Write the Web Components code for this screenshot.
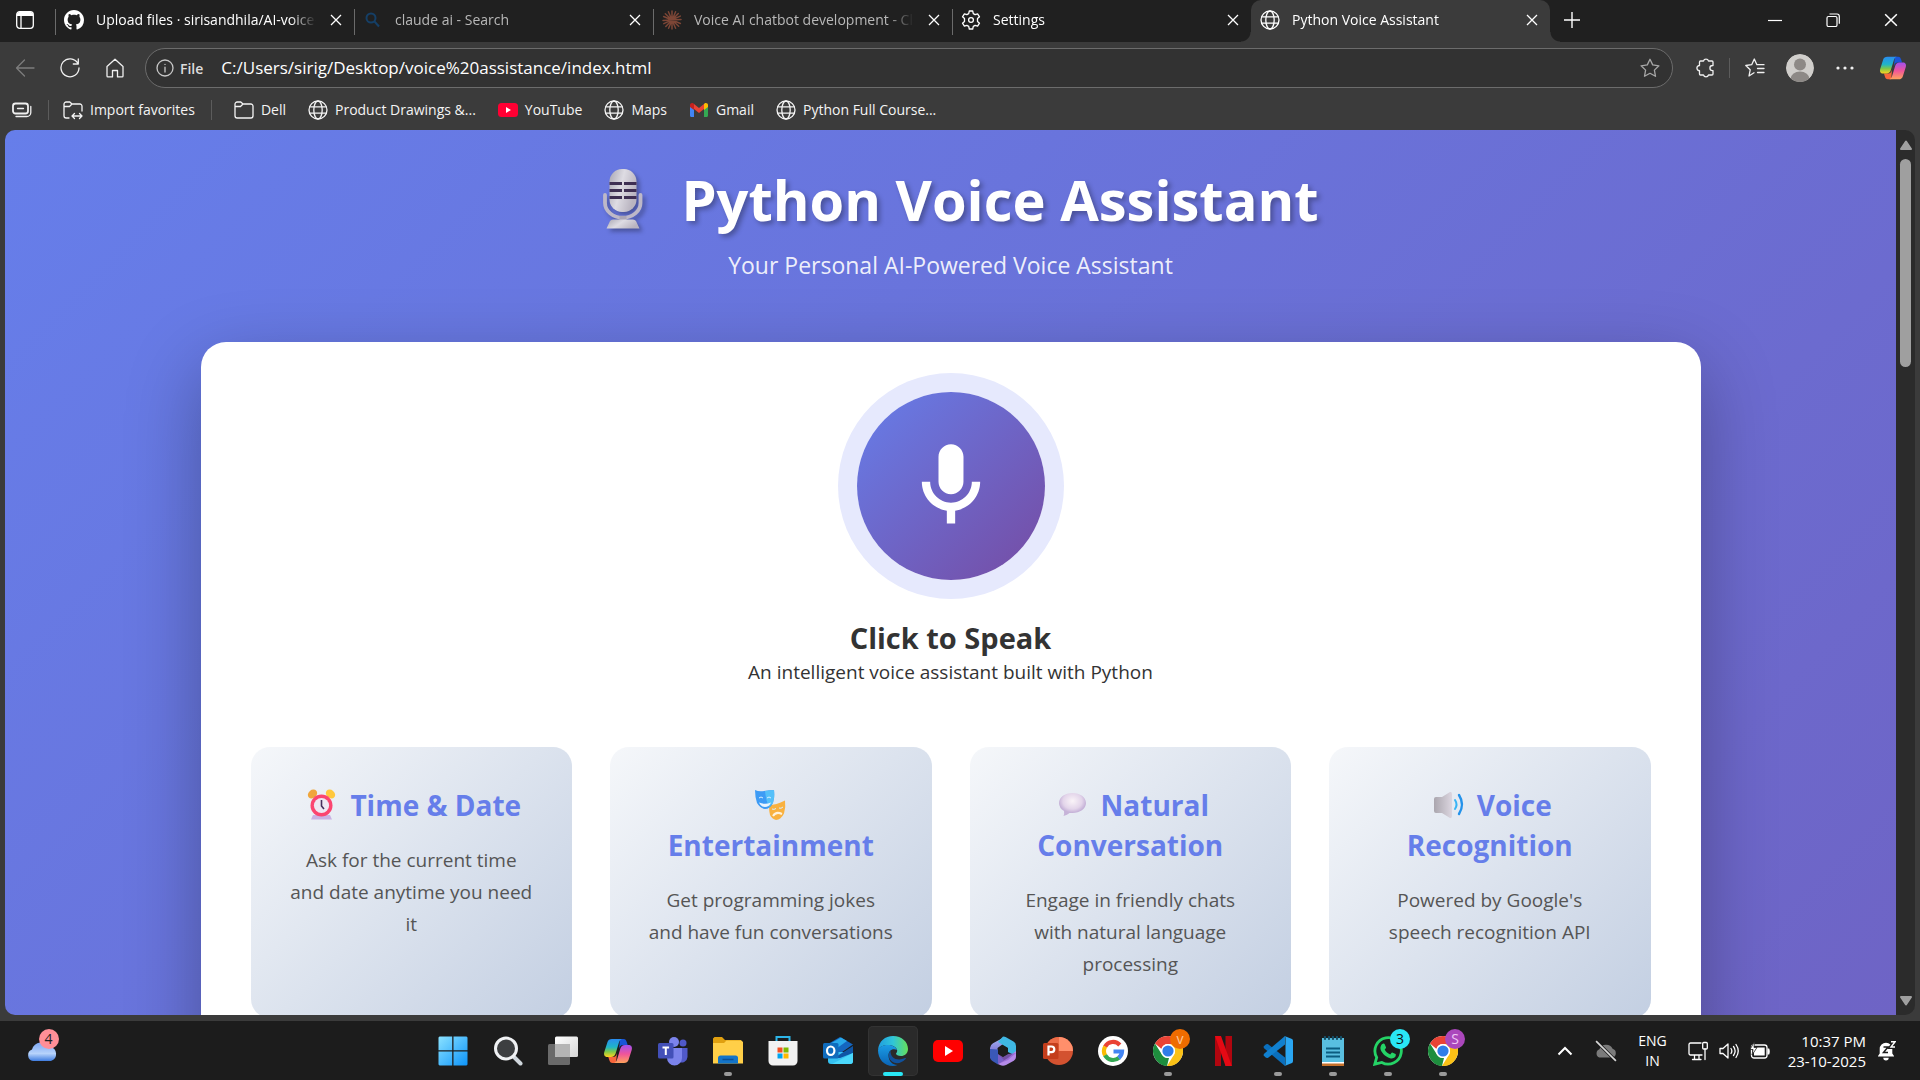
<!DOCTYPE html>
<html lang="en">
<head>
<meta charset="utf-8">
<title>Python Voice Assistant</title>
<style>
html, body { margin: 0; height: 100%; }
body { font-family: "Open Sans", "Noto Sans", sans-serif; background: #3b3b3b; color: #fff; overflow: hidden; }
</style>
</head>
<body>
<desktop-screen></desktop-screen>
<script>
const copilot = `<defs><linearGradient id="a" x1="0" y1="0" x2="0" y2="1"><stop offset="0" stop-color="#2a8cf0"/><stop offset=".45" stop-color="#1fb5c8"/><stop offset=".7" stop-color="#7cc84a"/><stop offset="1" stop-color="#ffd21f"/></linearGradient><linearGradient id="b" x1="0" y1="0" x2="0" y2="1"><stop offset="0" stop-color="#a050f0"/><stop offset=".5" stop-color="#f0549a"/><stop offset="1" stop-color="#ffa35c"/></linearGradient></defs>
<path fill="#1a55d8" d="M17 3h3.500c2 0 2.600 1.200 3.200 3l1 3h-4.500c-2.500 0-3.500 1.500-4.200 4z"/>
<path fill="#f8663c" d="M13 27H9.500c-2 0-2.600-1.200-3.200-3l-1-3h4.500c2.500 0 3.500-1.500 4.200-4z"/>
<path fill="url(#a)" d="M9 3h10c-2 .6-2.700 2.200-3.300 4.200l-3 10C12 19.500 10.600 21 8 21H4.500C1.500 21 .5 18.700 1.300 16L4.500 6C5.200 4 6.500 3 9 3z"/>
<path fill="url(#b)" d="M21 27H11c2-.6 2.700-2.200 3.300-4.200l3-10C18 10.500 19.400 9 22 9h3.500c3 0 4 2.300 3.200 5l-3.200 10c-.7 2-2 3-4.500 3z"/>`;
const chrome = `<circle cx="15" cy="15" r="15" fill="#fff"/><path fill="#ea4335" d="M2 7.500A15 15 0 0 1 28.200 8H15a7 7 0 0 0-6.500 5z"/><path fill="#1e8e3e" d="M2 7.500 8.900 18.500A7 7 0 0 0 15 22h1l-2 8A15 15 0 0 1 2 7.500z"/><path fill="#fbc116" d="M28.200 8H15a7 7 0 0 1 6.100 10.500L14 30A15 15 0 0 0 28.200 8z"/><circle cx="15" cy="15" r="7" fill="#fff"/><circle cx="15" cy="15" r="5.600" fill="#2f7de9"/>`;
const line = (d, extra = '') => `<g fill="none" stroke="currentColor" stroke-width="1.3" stroke-linecap="round" stroke-linejoin="round">${d}</g>${extra}`;
const ICONS = {
  panel: [20, line('<rect x="1.700" y="1.700" width="16.600" height="16.600" rx="3"/><path d="M6 6v12"/>', '<path fill="currentColor" d="M2 6V4.500A2.500 2.500 0 0 1 4.500 2h11A2.500 2.500 0 0 1 18 4.500V6z"/>')],
  github: [16, '<path fill="#fff" d="M8 0C3.580 0 0 3.580 0 8c0 3.540 2.290 6.530 5.470 7.590.4.070.55-.17.55-.38 0-.19-.01-.82-.01-1.490-2.010.37-2.530-.49-2.690-.94-.09-.23-.48-.94-.82-1.130-.28-.15-.68-.52-.01-.53.63-.01 1.080.58 1.230.82.72 1.210 1.870.87 2.330.66.070-.52.28-.87.51-1.070-1.780-.2-3.640-.89-3.640-3.950 0-.87.31-1.590.82-2.150-.08-.2-.36-1.020.08-2.120 0 0 .67-.21 2.200.82.64-.18 1.320-.27 2-.27s1.360.09 2 .27c1.530-1.040 2.200-.82 2.200-.82.44 1.100.16 1.920.08 2.120.51.56.82 1.270.82 2.150 0 3.070-1.870 3.750-3.650 3.950.29.25.54.73.54 1.480 0 1.070-.01 1.930-.01 2.200 0 .21.15.46.55.38A8.010 8.010 0 0 0 16 8c0-4.420-3.580-8-8-8z"/>'],
  search: [20, '<g fill="none" stroke="#153f66" stroke-width="2"><circle cx="8" cy="8" r="4.500"/><path d="m11.500 11.500 4.500 5"/></g>'],
  claude: [20, '<g stroke="#7d4636" stroke-width="1.500" stroke-linecap="round"><path d="M10 1v18M1 10.500l18-1M3.300 3.800l13.400 12.400M3.800 16.500l12.500-13M6.400 1.800l7.200 16.400M1.600 6.500l16.800 7M1.800 13.600l16.500-7.500M6.600 18.200l7-16.400"/></g>'],
  gear: [20, line('<circle cx="10" cy="10" r="2.400"/><path d="M8.300 1h3.400l.6 2.600 1.800 1 2.500-.8 1.900 3-2 1.800v2.800l2 1.800-1.900 3-2.500-.8-1.800 1-.6 2.600H8.300l-.6-2.600-1.800-1-2.500.8-1.900-3 2-1.800V8.600l-2-1.800 1.900-3 2.500.8 1.800-1z"/>')],
  globe: [20, line('<circle cx="10" cy="10" r="9"/><ellipse cx="10" cy="10" rx="4.200" ry="9"/><path d="M1.800 6.800h16.400M1.800 13.200h16.400"/>')],
  close: [12, '<path stroke="currentColor" stroke-width="1.300" d="m1 1 10 10M11 1 1 11"/>'],
  plus: [18, '<path stroke="currentColor" stroke-width="1.400" d="M9 1v16M1 9h16"/>'],
  min: [14, '<path stroke="currentColor" stroke-width="1.200" d="M0 7.500h14"/>'],
  restore: [14, '<g fill="none" stroke="currentColor" stroke-width="1.200"><rect x="1" y="3.500" width="10" height="10" rx="1.500"/><path d="M3.500 1h7.500a2.300 2.300 0 0 1 2.300 2.300v7.500"/></g>'],
  back: [20, line('<path d="M19 10H1.500M9.500 2l-8 8 8 8"/>')],
  reload: [20, line('<path d="M17.800 5.300A9 9 0 1 0 19 10M18.300 1v5h-5"/>')],
  home: [20, line('<path d="M2 8.600 10 1.300l8 7.300V18a.9.9 0 0 1-.9.900h-4.600v-6.400h-5v6.400H2.900A.9.900 0 0 1 2 18z"/>')],
  info: [18, line('<circle cx="9" cy="9" r="8"/><path d="M9 8.200V13M9 5.300v.1"/>')],
  star: [20, line('<path d="m10 1.300 2.700 5.600 6.200.9-4.500 4.300 1.100 6.200-5.500-3-5.500 3 1.100-6.200-4.500-4.300 6.200-.9z"/>')],
  puzzle: [20, line('<path d="M7.500 3a2.600 2.600 0 0 1 5 0H16a1 1 0 0 1 1 1v3.500h-.5a2.600 2.600 0 0 0 0 5.200h.5V16a1 1 0 0 1-1 1h-3.500a2.600 2.600 0 0 1-5 0H4.500a1 1 0 0 1-1-1v-3.300a2.600 2.600 0 0 1 0-5.200V4a1 1 0 0 1 1-1z"/>')],
  favs: [20, line('<path d="M9 14.800 4 18l1.200-6.200L.8 7.500l5.900-.8L9.300 1l2.600 5.700H19M12.500 10.500H19M12.500 14.500H19"/>')],
  dots: [20, '<g fill="currentColor"><circle cx="3" cy="10" r="1.600"/><circle cx="10" cy="10" r="1.600"/><circle cx="17" cy="10" r="1.600"/></g>'],
  avatar: [28, '<defs><clipPath id="c"><circle cx="14" cy="14" r="14"/></clipPath></defs><g clip-path="url(#c)"><circle cx="14" cy="14" r="14" fill="#d0cecb"/><circle cx="14" cy="10.500" r="6" fill="#8d8986"/><ellipse cx="14" cy="25" rx="9.500" ry="7.500" fill="#8d8986"/></g>'],
  copilot: [30, copilot],
  stack: [20, line('<rect x="1" y="3.500" width="15" height="10" rx="2.500" stroke-width="1.800"/><path d="M5.500 8.500h6"/><path d="M18.800 6.500v6a4 4 0 0 1-4 4H4"/>')],
  folder: [20, line('<path d="M1 4.200A2.200 2.200 0 0 1 3.200 2h3.600L9 4h7.800A2.200 2.200 0 0 1 19 6.200v9.600a2.200 2.200 0 0 1-2.200 2.200H3.200A2.200 2.200 0 0 1 1 15.800zM1 6.500h5.500L9 4"/>')],
  folderin: [20, line('<path d="M6 18H3.200A2.200 2.200 0 0 1 1 15.800V4.200A2.200 2.200 0 0 1 3.200 2h3.600L9 4h7.800A2.200 2.200 0 0 1 19 6.200V11M1 6.500h5.500L9 4M9.500 16H19M11.500 13.500 9 16l2.500 2.500M16.500 13.500 19 16l-2.500 2.500"/>')],
  youtube: [20, '<rect y="3" width="20" height="14" rx="3.500" fill="#ff0033"/><path fill="#fff" d="M8 7v6l5-3z"/>'],
  gmail: [20, '<path fill="#4285f4" d="M1 6v9.500c0 .8.600 1.500 1.400 1.500H5V9z"/><path fill="#34a853" d="M19 6v9.500c0 .8-.6 1.500-1.400 1.500H15V9z"/><path fill="#ea4335" d="M5 9V4l5 4 5-4v5l-5 4z"/><path fill="#c5221f" d="M1 7V5c0-1.800 2-2.700 3.500-1.600L5 4v6z"/><path fill="#fbbc04" d="M19 7V5c0-1.800-2-2.700-3.500-1.600L15 4v6z"/>'],
  mic: [24, '<path fill="#fff" d="M12 14c1.660 0 2.990-1.340 2.990-3L15 5c0-1.660-1.340-3-3-3S9 3.340 9 5v6c0 1.660 1.340 3 3 3zm5-3c0 2.760-2.240 5-5 5s-5-2.240-5-5H5c0 3.530 2.610 6.430 6 6.920V21h2v-3.080c3.390-.49 6-3.390 6-6.920h-2z"/>'],
  studio: ['0 0 82 60', '<defs><linearGradient id="m" x1="0" y1="0" x2="1" y2=".4"><stop offset="0" stop-color="#a9a6b2"/><stop offset=".5" stop-color="#dedce3"/><stop offset="1" stop-color="#b9b4c0"/></linearGradient></defs><path fill="none" stroke="#bdb8c8" stroke-width="3.800" stroke-linecap="round" d="M23 26v8a17.500 14.500 0 0 0 35.500 0v-8"/><path fill="#aaa5b5" d="M37.500 47h7v6h-7z"/><path fill="url(#m)" d="M28 52q1-1.500 3-1.500h20q2 0 3 1.500l3.500 7.500h-33z"/><rect x="27.500" width="27" height="43" rx="12.500" fill="url(#m)"/><g fill="#3e2f52"><path d="M27.500 13H40v3H27.500zM42 13h12.500v3H42zM27.500 20H40v3H27.500zM42 20h12.500v3H42zM27.500 27H40v3H27.500zM42 27h12.500v3H42z"/></g>'],
  alarm: ['0 0 41 31', '<ellipse cx="11.500" cy="5" rx="5" ry="4" transform="rotate(-40 11.500 5)" fill="#f0a63c"/><ellipse cx="29.500" cy="5" rx="5" ry="4" transform="rotate(40 29.500 5)" fill="#ffc83d"/><path fill="#c9b2e4" d="M12 26h17l2 4.500H10z"/><circle cx="20.500" cy="16.500" r="11" fill="#fb4570"/><circle cx="20.500" cy="16.500" r="7.600" fill="#eee7f2"/><path d="M20.500 11v6l2.500 3" fill="none" stroke="#46305c" stroke-width="1.600"/>'],
  masks: ['0 0 41 31', '<path fill="#f9b13f" d="M19 16q7 0 16-4.500 1 7-1 13-3 6-8 6.500-4-1-6-5-1-4-1-10z"/><path fill="#3d9bf5" d="M5 1q4 2 9 1t10-1q1 7-1 13-3 6-8 6-5-1-8-6Q5 8 5 1z"/><path fill="#5fd0fb" d="M15 2q5-.5 9-1 1 7-1 13l-4 4q-3-6-4-16z" opacity=".7"/><path d="M9 13.500q6 2.500 12 0-2 4.500-6 4.500t-6-4.500z" fill="#eaf5ff"/><path d="M9 9q2-2 4 0M17 9q2-2 4 0M22 20q2 1 4-.5M29 19q2 1 4-1" fill="none" stroke="#d9efff"/><path d="M23 27q3-5 9-2" fill="none" stroke="#fff2dc" stroke-width="2"/>'],
  bubble: ['0 0 41 31', '<defs><radialGradient id="r" cx=".5" cy=".35"><stop offset="0" stop-color="#faf4f8"/><stop offset=".7" stop-color="#e3d5ea"/><stop offset="1" stop-color="#c6b3d8"/></radialGradient></defs><path fill="url(#r)" d="M20.500 4C28 4 34 8.300 34 14S28 24 20.500 24h-3q-2 2-6 3 1-2 .5-5Q7 19 7 14C7 8.300 13 4 20.500 4z"/>'],
  speaker: ['0 0 41 31', '<defs><linearGradient id="s"><stop offset="0" stop-color="#aaa6ae"/><stop offset="1" stop-color="#dcd6e0"/></linearGradient></defs><path fill="url(#s)" d="M6 10q0-2 2-2h6l8-5q2-.6 2 2v22q0 2.600-2 2l-8-5H8q-2 0-2-2z"/><path d="M27 11q3 4.500 0 9" fill="none" stroke="#39b4f5" stroke-width="2" stroke-linecap="round"/><path d="M31 6q6 9.500 0 19" fill="none" stroke="#2492ea" stroke-width="2.400" stroke-linecap="round"/>'],
  widget: [30, '<defs><linearGradient id="w" x2="0" y2="1"><stop offset="0" stop-color="#7da7f4"/><stop offset=".6" stop-color="#b7d3fb"/><stop offset="1" stop-color="#3f7de0"/></linearGradient></defs><path fill="url(#w)" d="M6 25a6 6 0 0 1-1-11.500A10 10 0 0 1 23 11a7.200 7.200 0 0 1 1 14z"/>'],
  start: [30, '<defs><linearGradient id="g" x2="1" y2="1"><stop offset="0" stop-color="#8be2ff"/><stop offset="1" stop-color="#0d94fa"/></linearGradient></defs><path fill="url(#g)" d="M1.500.5h12.700v13.700H.5V1.500zM15.500.5h13l1 1v12.700h-14zM.5 15.500h13.700v14H1.500l-1-1zM15.500 15.500h14v13l-1 1h-13z"/>'],
  tsearch: [30, '<path stroke="#cfd6dc" stroke-width="4" stroke-linecap="round" d="m20.500 20.500 7 7"/><circle cx="13" cy="12.500" r="10.500" fill="#3d3f41" stroke="#f0f2f4" stroke-width="3"/>'],
  taskview: [30, '<defs><linearGradient id="t" x2="1" y2="1"><stop offset="0" stop-color="#fff"/><stop offset="1" stop-color="#d6d6d6"/></linearGradient></defs><rect y="8" width="22" height="21" rx="1.500" fill="#6a6a6a"/><rect x="7" y=".5" width="23" height="20.500" rx="1.500" fill="url(#t)"/><path fill="#b5b5b5" d="M7 8h15v13H8.500L7 19.500z"/>'],
  teams: [30, '<circle cx="16" cy="6" r="5" fill="#7b83eb"/><circle cx="25" cy="7" r="3.500" fill="#5059c9"/><path fill="#5059c9" d="M21 12h8.500v9a6 6 0 0 1-8.500 5z"/><path fill="#7b83eb" d="M9 12h15v10a7.500 7.500 0 0 1-15 0z"/><rect y="7" width="15.500" height="15.500" rx="1.500" fill="#4350b8"/><path stroke="#fff" stroke-width="2" d="M4.500 11.500h6.600M7.800 11.500v7.500"/>'],
  explorer: [30, '<path fill="#e0a010" d="M0 2.500 1.500 1H9l3 3h16v6H0z"/><path fill="#ffcf48" d="M0 7h11l2.500-2.500H28.500L30 6v21.500H0z"/><path fill="#1374c8" d="M5 27.500V22q0-2.500 2.500-2.500h15Q25 19.500 25 22v5.500z"/><path stroke="#0b4f94" stroke-width="1.500" d="M9.500 23.500h11"/>'],
  store: [30, '<path fill="none" stroke="#2db5e8" stroke-width="2" d="M8.500 6V1h13v5"/><path fill="#f2f2f2" d="M.5 5h29v20a4.500 4.500 0 0 1-4.500 4.500H5A4.500 4.500 0 0 1 .5 25z"/><path fill="#f25022" d="M9.500 11.500h5v5h-5z"/><path fill="#7fba00" d="M15.500 11.500h5v5h-5z"/><path fill="#00a4ef" d="M9.500 17.500h5v5h-5z"/><path fill="#ffb900" d="M15.500 17.500h5v5h-5z"/>'],
  outlook: [30, '<path fill="#1466c0" d="M5 8 17 1l13 7.500-13 9z"/><path fill="#28a8ea" d="M5 9 18 1.500 24 5 10 15z"/><path fill="#35c1f1" d="M5 16h25v9q0 3-3 3H8q-3 0-3-3z"/><path fill="#0f55a5" d="m11 22 19-12v7L17 22z"/><path fill="#4bd8fb" d="m9 28 21-11v8q0 3-3 3z"/><rect y="7" width="15.500" height="15.500" rx="1.500" fill="#0f6cbd"/><ellipse cx="7.700" cy="14.700" rx="3.700" ry="4.200" fill="none" stroke="#fff" stroke-width="2.200"/>'],
  edge: [30, '<defs><linearGradient id="e"><stop offset="0" stop-color="#1f9de0"/><stop offset=".5" stop-color="#30c5d8"/><stop offset="1" stop-color="#66e05a"/></linearGradient><linearGradient id="f" x2="0" y2="1"><stop offset="0" stop-color="#1b9ce5"/><stop offset="1" stop-color="#0a63b5"/></linearGradient></defs><path fill="url(#e)" d="M0 14C1 5 7 0 15 0c9 0 15 6 15 13 0 4.500-3.500 7-7 7-3 0-5-1-5-2.200 0-.8 1.200-1.200 1.200-3.300C19 11.500 15 9 10.500 9 5 9 1.500 11 0 14z"/><path fill="url(#f)" d="M0 14c1.500-3.500 5.500-5 9.500-5 5 0 8.500 2 9.500 5-5-2-8.500 1-8.500 5.500 0 5.500 4 9.500 9 9.500-1.500.7-3 1-4.500 1C6 30 0 23 0 14z"/><path fill="#10519c" d="M12.500 14.500c-2.500 3-2.500 8 1.500 11s9.500 2 13.800-2.800c.4-.6-.2-1-.8-.6-7 3.400-15 .4-14.500-7.600z"/>'],
  yt: [30, '<rect y="4" width="30" height="22" rx="5" fill="#f00"/><path fill="#fff" d="M12 10v10l8-5z"/>'],
  m365: [30, '<defs><linearGradient id="p" x2="0" y2="1"><stop offset="0" stop-color="#a8b8f5"/><stop offset="1" stop-color="#6a5acb"/></linearGradient></defs><path fill="url(#p)" d="M17 .8 5 7.200Q2 9 2 12v9q0 2 2.500 1l5-4v-6L19 5z"/><path fill="#3fb8e4" d="M15 .5q1.500 0 3 .8l7.500 4.300Q28 7 28 10v10l-8-4v-4L10 6z"/><path fill="#3a58b8" d="M2 13v8q0 2.500 2 3.700l6 3.800 6-4.500-6-6v-4.500z"/><path fill="#b48ae8" d="M28 15v6q0 2.500-2.200 3.800L18 29q-3 1.500-6 0l-2-1 10-6z"/><path fill="#8f62cf" d="m10 18 5 3 5-3 8-1-8 7-10 4z" opacity=".75"/><path fill="#1c1c1c" d="m15 9.500 5 2.700v5.600l-5 2.700-5-2.700v-5.600z"/>'],
  ppt: [30, '<circle cx="16" cy="15" r="14" fill="#d35230"/><path fill="#ff8f6b" d="M16 1a14 14 0 0 1 14 14H16z"/><path fill="#ed6c47" d="M16 1v14H2A14 14 0 0 1 16 1z"/><rect y="7" width="15.500" height="16" rx="1.500" fill="#c43e1c"/><path fill="none" stroke="#fff" stroke-width="2.200" d="M5.500 19.500v-9H8.500a2.700 2.700 0 0 1 0 5.600h-3"/>'],
  google: [30, '<circle cx="15" cy="15" r="15" fill="#fff"/><g fill="none" stroke-width="4.200"><path stroke="#ea4335" d="M21.800 9A9 9 0 0 0 7.100 10.700"/><path stroke="#fbbc05" d="M7.200 10.500a9 9 0 0 0 0 9"/><path stroke="#34a853" d="M7.100 19.300A9 9 0 0 0 21 21.700"/><path stroke="#4285f4" d="M20.700 22a9 9 0 0 0 3.300-6.500h-8.500"/></g>'],
  chrome: [30, chrome],
  netflix: [30, '<path fill="#b1060f" d="M7 0h6v30l-6 .5zM17.500 0H24v30.500l-6.500-.5z"/><path fill="#e50914" d="M7 0h6l11 30.500-6.500-.5z"/>'],
  vscode: [30, '<path fill="#0a6fbd" d="M.6 10.500 3 8.200l1.800-.2L22 21.500V30L.8 12z"/><path fill="#1180cf" d="M.6 19.500 3 21.800l1.800.2L22 8.500V0L.8 18z"/><path fill="#2aa6f2" d="m21.500 0 7.500 3q1 .6 1 2v20q0 1.400-1 2l-7.500 3q1-.6 1-2V2q0-1.400-1-2z"/>'],
  notepad: [30, '<path fill="#c5712c" d="M4 4h22v26H4z"/><path fill="#fff" d="M4 4h22v23.500H4z"/><path fill="#59bfe0" d="M4 2h22v24H4z"/><path stroke="#0b5d80" stroke-width="1.800" d="M8 12.500h14M8 16.500h14M8 20.500h14"/><path stroke="#154e66" stroke-width="2.200" stroke-linecap="round" d="M7 1v2M11 1v2M15 1v2M19 1v2M23 1v2"/>'],
  whatsapp: [30, '<path fill="none" stroke="#25d366" stroke-width="2.800" d="M1.800 28.200 3.700 21.400A13.200 13.200 0 1 1 8.800 26.400z"/><path fill="#25d366" d="M10.500 7.500c.6 0 1 .1 1.300.9l1.200 2.800c.1.500 0 .9-1.300 2.300 1.300 2.500 3 3.800 5.500 4.900.6-.5 1.500-2.100 2-1.900l3.400 1.600c.4.300.3 2-.5 3-1 1-3 1.700-5.100 1.100-5-1.400-9-6-9.500-9.100-.4-2.700 1.300-5.600 3-5.600z"/>'],
  chevron: [16, '<path fill="none" stroke="#fff" stroke-width="2" d="m1.500 11.500 6.500-6.500 6.500 6.500"/>'],
  cloudoff: [20, '<path fill="#7b7b7b" d="M4 16a4 4 0 0 1 0-7.500A6.500 6.500 0 0 1 16 8a4.200 4.200 0 0 1 0 8z"/><path stroke="#1c1c1c" stroke-width="3" d="m1 1 18 18"/><path stroke="#d8d8d8" stroke-width="1.500" d="m1 1 18 18"/>'],
  net: [20, line('<path d="M13 2H2.500A1.500 1.500 0 0 0 1 3.500v9A1.500 1.500 0 0 0 2.500 14H14M4.500 18.500H13M6.500 14v4M11 14v4M17 8v10.500"/><rect x="14.700" y="1.500" width="4.600" height="6.500" rx="1"/>')],
  volume: [20, line('<path d="M1 7.500h3L9 3v14l-5-4.500H1zM12 7.500q1.700 2.500 0 5M14.500 5.500q3.300 4.500 0 9M17 3.500q4.500 6.500 0 13"/>')],
  battery: [20, line('<rect x="1.500" y="4" width="15.500" height="13" rx="2.500"/>', '<path fill="currentColor" d="M4 6.500h10.700v8H4zM17.500 7.500h1.700q1.200 3 0 6h-1.700z"/><path fill="#fff" stroke="#1c1c1c" stroke-width=".8" d="M4.500.5 0 8.500h3L2 14l5-7.500H4z"/>')],
  bell: [20, '<path fill="#fff" d="M2 15.500V15l1.700-2.500V8a6.300 6.300 0 0 1 12.600 0v4.500L18 15v.5zM7.300 16.800h5.400a2.700 2.700 0 0 1-5.400 0z"/><path fill="none" stroke="#1c1c1c" stroke-width="1.500" d="M7.500 6h4.500l-4.500 5.500H12"/><path fill="none" stroke="#1c1c1c" stroke-width="4" d="M15 .8h4L15 6h4"/><path fill="none" stroke="#fff" stroke-width="1.400" d="M15 .8h4L15 6h4"/>'],
  up: [12, '<path fill="#9f9f9f" stroke="#9f9f9f" stroke-width="2" stroke-linejoin="round" d="M6 2.500 11 10H1z"/>'],
  down: [12, '<path fill="#9f9f9f" stroke="#9f9f9f" stroke-width="2" stroke-linejoin="round" d="M6 9.500 11 2H1z"/>']
};

function define(name, markup, setup) {
  const template = document.createElement('template');
  template.innerHTML = markup;
  customElements.define(name, class extends HTMLElement {
    constructor() {
      super();
      this.attachShadow({ mode: 'open' }).append(template.content.cloneNode(true));
    }
    connectedCallback() { if (setup) setup(this, this.shadowRoot); }
  });
}

// Fills the icon placeholder of a component from its "icon" attribute.
function placeIcon(el, root, w = 20, h = w) {
  const slot = root.querySelector('i');
  if (!slot) return;
  const icon = document.createElement('ui-icon');
  icon.setAttribute('name', el.getAttribute('icon'));
  icon.setAttribute('w', w);
  icon.setAttribute('h', h);
  slot.replaceWith(icon);
}

define('ui-icon', `<style>:host{display:inline-flex;flex:none}svg{display:block}</style>`, (el, root) => {
  if (root.querySelector('svg')) return;
  const [box, body] = ICONS[el.getAttribute('name')];
  const viewBox = typeof box === 'number' ? `0 0 ${box} ${box}` : box;
  const w = el.getAttribute('w') || 20, h = el.getAttribute('h') || w;
  root.innerHTML += `<svg width="${w}" height="${h}" viewBox="${viewBox}" aria-hidden="true">${body}</svg>`;
});

define('icon-button', `<style>
:host{display:inline-flex;flex:none;width:var(--w,46px);box-sizing:border-box}
button{all:unset;display:flex;flex:1;align-items:center;justify-content:center;height:40px}
</style><button type="button"><slot></slot></button>`, (el, root) => {
  root.querySelector('button').setAttribute('aria-label', el.getAttribute('label') || '');
});

define('browser-tab', `<style>
:host{display:flex;position:relative;flex:0 1 299px;min-width:0;height:42px;box-sizing:border-box}
:host(:not([active]))::before{content:"";width:1px;height:26px;margin-top:9px;margin-right:-1px;background:#6b6b6b}
:host([active]){background:#3b3b3b;border-radius:10px 10px 0 0}
:host([active])::before,:host([active])::after{content:"";position:absolute;bottom:0;width:10px;height:10px}
:host([active])::before{right:100%;background:radial-gradient(circle at 0 0,#202020 9px,#3b3b3b 10px)}
:host([active])::after{left:100%;background:radial-gradient(circle at 100% 0,#202020 9px,#3b3b3b 10px)}
button{all:unset;display:flex;align-items:center;height:40px}
.tab{flex:1;min-width:0;gap:12px;padding-left:9px}
span{flex:1;min-width:0;overflow:hidden;white-space:nowrap;font-size:14px;line-height:20px;color:#fff;-webkit-mask-image:linear-gradient(90deg,#000 calc(100% - 28px),transparent calc(100% - 2px));mask-image:linear-gradient(90deg,#000 calc(100% - 28px),transparent calc(100% - 2px))}
:host([asleep]) span{color:#b8b8b8}
.close{width:36px;justify-content:center}
</style><button class="tab" type="button"><i></i><span><slot></slot></span></button><button class="close" type="button" aria-label="Close tab"><ui-icon name="close" w="12"></ui-icon></button>`, (el, root) => placeIcon(el, root));

define('tab-strip', `<style>
:host{display:flex;flex:none;height:42px;background:#202020;color:#fff}
.menu{--w:55px;padding-right:5px}.new{--w:44px}.win{margin-left:auto;display:flex}.win icon-button{--w:58px}
</style>
<icon-button class="menu" label="Tab actions"><ui-icon name="panel" w="20"></ui-icon></icon-button>
<browser-tab icon="github">Upload files · sirisandhila/AI-voice-assistant</browser-tab>
<browser-tab icon="search" asleep>claude ai - Search</browser-tab>
<browser-tab icon="claude" asleep>Voice AI chatbot development - Claude</browser-tab>
<browser-tab icon="gear">Settings</browser-tab>
<browser-tab icon="globe" active>Python Voice Assistant</browser-tab>
<icon-button class="new" label="New tab"><ui-icon name="plus" w="18"></ui-icon></icon-button>
<div class="win">
<icon-button label="Minimize"><ui-icon name="min" w="14"></ui-icon></icon-button>
<icon-button label="Restore"><ui-icon name="restore" w="14"></ui-icon></icon-button>
<icon-button label="Close"><ui-icon name="close" w="14"></ui-icon></icon-button>
</div>`);

define('address-bar', `<style>
:host{display:flex;align-items:center;flex:1;height:40px;box-sizing:border-box;border:1px solid #6c6c6c;border-radius:20px;background:#323232;padding:0 12px 0 10px}
ui-icon{color:#c8c8c8}
label{font-size:14px;font-weight:600;color:#dcdcdc;margin:0 18px 0 6px}
input{all:unset;flex:1;min-width:0;font-size:17px;line-height:24px;color:#fff}
button{all:unset;display:flex}
button ui-icon{color:#a8a8a8}
</style><ui-icon name="info" w="18"></ui-icon><label for="url">File</label><input id="url" type="text" value="C:/Users/sirig/Desktop/voice%20assistance/index.html" spellcheck="false"><button type="button" aria-label="Add to favorites"><ui-icon name="star"></ui-icon></button>`);

define('tool-bar', `<style>
:host{display:flex;flex:none;align-items:center;padding:6px 5px 2px 2px;color:#f0f0f0}
address-bar{margin:0 10px 0 8px}
.off{color:#7d7d7d}
.nav{--w:45px}.ext{--w:46px}.fav{--w:50px}.me{--w:40px}.more{--w:50px}.co{--w:45px}
i{width:1px;height:20px;background:#5c5c5c}
</style>
<icon-button class="nav off" label="Back"><ui-icon name="back"></ui-icon></icon-button>
<icon-button class="nav" label="Refresh"><ui-icon name="reload"></ui-icon></icon-button>
<icon-button class="nav" label="Home"><ui-icon name="home"></ui-icon></icon-button>
<address-bar></address-bar>
<icon-button class="ext" label="Extensions"><ui-icon name="puzzle"></ui-icon></icon-button><i></i>
<icon-button class="fav" label="Favorites"><ui-icon name="favs"></ui-icon></icon-button>
<icon-button class="me" label="Profile"><ui-icon name="avatar" w="28"></ui-icon></icon-button>
<icon-button class="more" label="Settings and more"><ui-icon name="dots"></ui-icon></icon-button>
<icon-button class="co" label="Copilot"><ui-icon name="copilot" w="28"></ui-icon></icon-button>`);

define('fav-link', `<style>
:host{display:flex;flex:none}
a{display:flex;align-items:center;gap:7px;color:#f4f4f4;text-decoration:none;font-size:14px;line-height:20px;white-space:nowrap}
</style><a href="#"><i></i><slot></slot></a>`, (el, root) => placeIcon(el, root));

define('favorites-bar', `<style>
:host{display:flex;flex:none;align-items:center;gap:22px;height:40px;padding-left:12px;color:#f0f0f0}
i{width:1px;height:20px;background:#5c5c5c}
.lead{display:flex;align-items:center;gap:16px}
.lead i:first-of-type{margin-right:-2px}
</style>
<div class="lead"><ui-icon name="stack"></ui-icon><i></i><fav-link icon="folderin">Import favorites</fav-link><i></i></div>
<fav-link icon="folder">Dell</fav-link>
<fav-link icon="globe">Product Drawings &amp;...</fav-link>
<fav-link icon="youtube">YouTube</fav-link>
<fav-link icon="globe">Maps</fav-link>
<fav-link icon="gmail">Gmail</fav-link>
<fav-link icon="globe">Python Full Course...</fav-link>`);

define('page-header', `<style>
:host{display:block;text-align:center;color:#fff}
h1{display:flex;justify-content:center;align-items:center;gap:17px;margin:0 0 10px;font-size:56px;line-height:80px;font-weight:700;white-space:nowrap;text-shadow:3px 3px 5px rgba(0,0,0,.3)}
h1 ui-icon{filter:drop-shadow(3px 3px 2px rgba(0,0,0,.3))}
p{margin:0;font-size:23px;line-height:32px;color:rgba(255,255,255,.9)}
</style><h1><ui-icon name="studio" w="82" h="60"></ui-icon><slot name="title"></slot></h1><p><slot></slot></p>`);

define('speak-control', `<style>
:host{display:flex;flex-direction:column;align-items:center;color:#333}
button{all:unset;display:flex;align-items:center;justify-content:center;width:188px;height:188px;border-radius:50%;background:linear-gradient(135deg,#667eea,#764ba2);box-shadow:0 0 0 19px #e6e9fd}
h2{margin:38px 0 0;font-size:29px;line-height:40px;font-weight:700}
p{margin:0;font-size:19px;line-height:28px}
</style><button type="button" aria-label="Click to Speak"><ui-icon name="mic" w="100"></ui-icon></button><h2>Click to Speak</h2><p><slot></slot></p>`);

define('feature-card', `<style>
:host{display:block;box-sizing:border-box;padding:38px 20px;border-radius:19px;background:linear-gradient(135deg,#f5f7fa,#c3cfe2);text-align:center;white-space:nowrap}
h3{margin:0 0 19px;font-size:28px;line-height:40px;font-weight:700;color:#667eea}
p{margin:0;font-size:19px;line-height:32px;color:#555}
ui-icon{height:28px;vertical-align:-4px;margin-right:8px}
:host([stacked]) ui-icon{margin-right:0}
</style><h3><i></i><slot name="title"></slot></h3><p><slot></slot></p>`, (el, root) => placeIcon(el, root, 41, 31));

define('assistant-page', `<style>
:host{display:block;flex:1;min-width:0;overflow:hidden;box-sizing:border-box;padding:29px 25px 0;background:linear-gradient(135deg,#667eea,#764ba2) top/100% 3520px no-repeat}
main{max-width:1500px;box-sizing:border-box;margin:61px auto 0;padding:50px 50px 80px;border-radius:25px;background:#fff;box-shadow:0 25px 75px rgba(0,0,0,.3)}
.cards{display:grid;grid-template-columns:repeat(4,1fr);gap:38px;margin-top:61px}
</style>
<page-header><span slot="title">Python Voice Assistant</span>Your Personal AI-Powered Voice Assistant</page-header>
<main>
<speak-control>An intelligent voice assistant built with Python</speak-control>
<section class="cards">
<feature-card icon="alarm"><span slot="title">Time &amp; Date</span>Ask for the current time<br>and date anytime you need<br>it</feature-card>
<feature-card icon="masks" stacked><span slot="title"><br>Entertainment</span>Get programming jokes<br>and have fun conversations</feature-card>
<feature-card icon="bubble"><span slot="title">Natural<br>Conversation</span>Engage in friendly chats<br>with natural language<br>processing</feature-card>
<feature-card icon="speaker"><span slot="title">Voice<br>Recognition</span>Powered by Google's<br>speech recognition API</feature-card>
</section>
</main>`);

define('scroll-rail', `<style>
:host{display:flex;flex:none;flex-direction:column;align-items:center;width:19px;box-sizing:border-box;padding:9px 0 8px;background:#2b2b2b}
div{width:11px;height:24%;margin:8px 0 auto;border-radius:6px;background:#9f9f9f}
</style><ui-icon name="up" w="12"></ui-icon><div></div><ui-icon name="down" w="12"></ui-icon>`);

define('task-button', `<style>
:host{display:flex;flex:none;justify-content:center;width:55px}
button{all:unset;position:relative;display:flex;align-items:center;justify-content:center;width:50px;height:50px;box-sizing:border-box;border-radius:5px}
:host([active]) button{background:#2a2a2a;box-shadow:inset 0 0 0 1px #333}
:host([open]) button::after,:host([active]) button::after{content:"";position:absolute;left:50%;bottom:0;width:8px;height:4px;margin-left:-4px;border-radius:2px;background:#9a9a9a}
:host([active]) button::after{width:20px;margin-left:-10px;background:#29e7f5}
b{position:absolute;top:-6px;right:var(--right,3px);display:flex;align-items:center;justify-content:center;width:20px;height:20px;border-radius:50%;font-size:14px;line-height:20px;font-weight:400;color:var(--fg,#fff);background:var(--badge)}
:host([badge]) b{top:3px}
b:empty{display:none}
</style><button type="button"><i></i><b></b></button>`, (el, root) => {
  placeIcon(el, root, 30);
  root.querySelector('b').textContent = el.getAttribute('badge') || '';
  root.querySelector('button').setAttribute('aria-label', el.getAttribute('icon'));
});

define('system-tray', `<style>
:host{display:flex;align-items:center;justify-content:flex-end;color:#fff;font-size:15px;line-height:20px}
.chev{margin-right:22px}.lang{text-align:center;margin:0 21px;font-size:14px}.status{display:flex;gap:11px}
time{text-align:right;margin:0 10px 0 18px;white-space:nowrap}
</style>
<ui-icon class="chev" name="chevron" w="16"></ui-icon><ui-icon name="cloudoff" w="22"></ui-icon>
<div class="lang">ENG<br>IN</div>
<div class="status"><ui-icon name="net"></ui-icon><ui-icon name="volume"></ui-icon><ui-icon name="battery"></ui-icon></div>
<time>10:37 PM<br>23-10-2025</time><ui-icon name="bell"></ui-icon>`);

define('task-bar', `<style>
:host{display:flex;flex:none;align-items:center;height:59px;background:#1c1c1c}
.left{flex:1;padding-left:14px}
.apps{display:flex;margin-right:14px}
system-tray{flex:1;min-width:0;box-sizing:border-box;padding-right:24px}
</style>
<div class="left"><task-button icon="widget" badge="4" style="--badge:#ff8f98;--fg:#222;--right:8px"></task-button></div>
<nav class="apps">
<task-button icon="start"></task-button><task-button icon="tsearch"></task-button><task-button icon="taskview"></task-button><task-button icon="copilot"></task-button><task-button icon="teams"></task-button><task-button icon="explorer" open></task-button><task-button icon="store"></task-button><task-button icon="outlook"></task-button><task-button icon="edge" active></task-button><task-button icon="yt"></task-button><task-button icon="m365"></task-button><task-button icon="ppt"></task-button><task-button icon="google"></task-button><task-button icon="chrome" open badge="v" style="--badge:#ef6c00;--fg:#ffc899"></task-button><task-button icon="netflix"></task-button><task-button icon="vscode" open></task-button><task-button icon="notepad" open></task-button><task-button icon="whatsapp" open badge="3" style="--badge:#29e7f5;--fg:#111"></task-button><task-button icon="chrome" open badge="S" style="--badge:#ab47bc;--fg:#f0c8f5"></task-button>
</nav>
<system-tray></system-tray>`);

define('desktop-screen', `<style>
:host{display:flex;flex-direction:column;height:100vh}
.view{display:flex;flex:1;min-height:0;margin:0 5px 6px;border-radius:10px;overflow:hidden}
</style>
<tab-strip></tab-strip><tool-bar></tool-bar><favorites-bar></favorites-bar>
<div class="view"><assistant-page></assistant-page><scroll-rail></scroll-rail></div>
<task-bar></task-bar>`);
</script>
</body>
</html>
